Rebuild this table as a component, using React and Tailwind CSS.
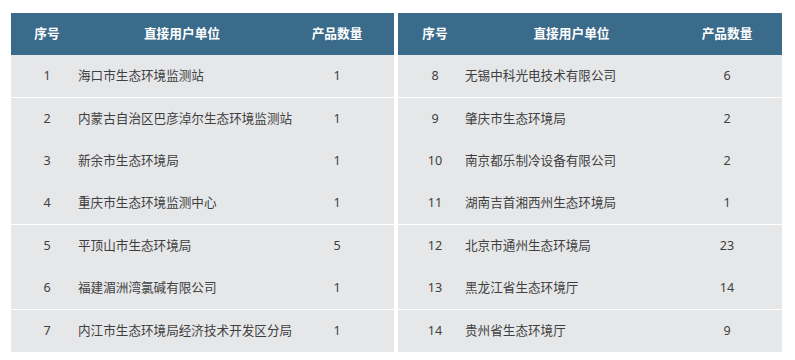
const left = [
  [1, '海口市生态环境监测站', 1],
  [2, '内蒙古自治区巴彦淖尔生态环境监测站', 1],
  [3, '新余市生态环境局', 1],
  [4, '重庆市生态环境监测中心', 1],
  [5, '平顶山市生态环境局', 5],
  [6, '福建湄洲湾氯碱有限公司', 1],
  [7, '内江市生态环境局经济技术开发区分局', 1],
]

const right = [
  [8, '无锡中科光电技术有限公司', 6],
  [9, '肇庆市生态环境局', 2],
  [10, '南京都乐制冷设备有限公司', 2],
  [11, '湖南吉首湘西州生态环境局', 1],
  [12, '北京市通州生态环境局', 23],
  [13, '黑龙江省生态环境厅', 14],
  [14, '贵州省生态环境厅', 9],
]

// rows after which a white line is drawn
const breaks = [0, 3, 5]

function Table({ rows, cols, idPad }) {
  return (
    <div className="flex flex-col">
      <div className="grid h-[42px] items-center bg-[#3b6b8b] text-[12.7px] font-bold text-white" style={{ gridTemplateColumns: cols }}>
        <div className={`text-center ${idPad}`}>序号</div>
        <div className="pl-[6px] text-center">直接用户单位</div>
        <div className="text-center">产品数量</div>
      </div>
      {rows.map((r, i) => (
        <div
          key={r[0]}
          className={`grid items-center bg-[#e6e7e9] text-[12.6px] text-[#3f3f3f] ${breaks.includes(i - 1) ? 'h-[43px] border-t border-white' : 'h-[42px]'}`}
          style={{ gridTemplateColumns: cols }}
        >
          <div className={`text-center ${idPad}`}>{r[0]}</div>
          <div className="whitespace-nowrap">{r[1]}</div>
          <div className="text-center">{r[2]}</div>
        </div>
      ))}
    </div>
  )
}

export default function App() {
  return (
    <div className="h-[360px] w-[795px] bg-white pt-[13px]" style={{ fontFamily: '"Noto Sans", "Noto Sans CJK SC", sans-serif' }}>
      <div className="flex">
        <div className="ml-[11px] w-[383px]">
          <Table rows={left} cols="67px 202px 114px" idPad="pl-[5px]" />
        </div>
        <div className="ml-[4px] w-[384px]">
          <Table rows={right} cols="67px 207px 110px" idPad="pl-[7px]" />
        </div>
      </div>
    </div>
  )
}
